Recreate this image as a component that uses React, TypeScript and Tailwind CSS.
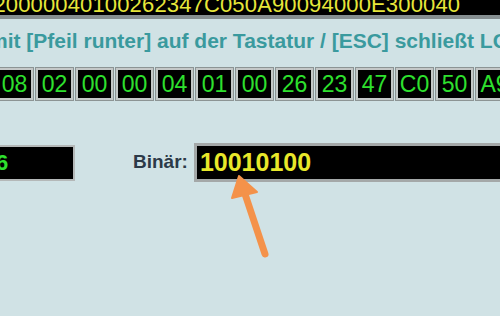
const HEX_BYTES = ["08", "02", "00", "00", "04", "01", "00", "26", "23", "47", "C0", "50", "A9"];

const FONT = { fontFamily: '"Liberation Sans", Arial, sans-serif' };

const HexBox = ({ value }: { value: string }) => (
  <div className="w-[37px] h-[32px] shrink-0 bg-black border-2 border-[#c4c8c8] outline outline-1 outline-[#8c9494] flex items-center justify-center text-[23px] leading-none text-[#2ee02e]">
    {value}
  </div>
);

export default function App() {
  return (
    <div className="relative w-[500px] h-[316px] overflow-hidden bg-[#d0e2e5]" style={FONT}>
      {/* hex dump */}
      <div className="h-[15px] bg-black overflow-hidden">
        <div className="ml-[-19px] mt-[-6px] whitespace-nowrap text-[22px] leading-[22px] tracking-[0.15px] text-[#e6e63a]">
          020000040100262347C050A90094000E300040
        </div>
      </div>
      <div className="h-[4px] bg-[#858e90]"></div>

      {/* hint */}
      <div className="mt-[12px] ml-[-11px] whitespace-nowrap text-[21px] leading-[20px] font-bold text-[#3a9a9e]">
        mit [Pfeil runter] auf der Tastatur / [ESC] schließt LCD
      </div>

      {/* bytes */}
      <div className="mt-[17px] ml-[-4px] flex gap-[3px]">
        {HEX_BYTES.map((b, i) => (
          <HexBox key={i} value={b} />
        ))}
      </div>

      {/* values */}
      <div className="mt-[43px] flex items-center">
        <div className="w-[77px] h-[36px] ml-[-2px] shrink-0 bg-black border-2 border-[#b4b8b8] flex items-center text-[22px] font-bold text-[#2ee02e]">
          <span className="ml-[-4px]">6</span>
        </div>
        <div className="ml-[58px] text-[19px] font-bold text-[#2c3a48]">Binär:</div>
        <div className="ml-[6px] h-[39px] flex-1 mr-[-20px] bg-black border-[3px] border-[#a4a8a8] flex items-center pl-[3px] text-[25px] font-bold text-[#e8e82a]">
          10010100
        </div>
      </div>

      {/* annotation arrow */}
      <svg className="absolute left-0 top-0" width="500" height="316" viewBox="0 0 500 316">
        <line x1="265" y1="254" x2="245" y2="194" stroke="#f4924a" strokeWidth="7" strokeLinecap="round" />
        <polygon points="239,176 232,198 257,192" fill="#f4924a" stroke="#f4924a" strokeWidth="2" strokeLinejoin="round" />
      </svg>
    </div>
  );
}
